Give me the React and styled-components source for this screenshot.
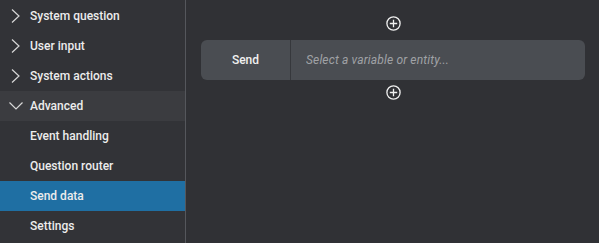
import React from "react";
import styled, { createGlobalStyle } from "styled-components";

const GlobalStyle = createGlobalStyle`
  html, body {
    margin: 0;
    padding: 0;
    background: #303135;
  }
  body {
    font-family: Roboto, "Liberation Sans", sans-serif;
  }
`;

const Layout = styled.div`
  display: flex;
  height: 100vh;
  overflow: hidden;
`;

const Sidebar = styled.nav`
  width: 185px;
  flex-shrink: 0;
  padding-top: 1px;
  background: #323337;
  border-right: 1px solid #55575c;
`;

const Row = styled.div`
  display: flex;
  align-items: center;
  gap: 6px;
  height: 30px;
  padding-left: ${(p) => (p.$child ? "30px" : "8px")};
  background: ${(p) => (p.$active ? "#1f6fa3" : p.$open ? "#3b3c40" : "transparent")};
  color: #ececec;
  font-size: 12px;
  font-weight: 500;
  cursor: pointer;
`;

const Icon = styled.svg`
  width: 16px;
  height: 16px;
  flex-shrink: 0;
  fill: none;
  stroke: #d8d8d8;
  stroke-width: 1.2;
`;

const Main = styled.main`
  flex: 1;
  display: flex;
  flex-direction: column;
  align-items: center;
  padding: 16px 14px 0 15px;
`;

const AddButton = styled.button`
  width: 15px;
  height: 15px;
  padding: 0;
  border: none;
  background: none;
  display: flex;
  margin-bottom: ${(p) => p.$gap || 0}px;
  cursor: pointer;

  svg {
    width: 15px;
    height: 15px;
    fill: none;
    stroke: #f0f0f0;
    stroke-width: 1.3;
  }
`;

const Card = styled.div`
  width: 100%;
  height: 40px;
  display: flex;
  background: #4a4d52;
  border-radius: 6px;
  margin-bottom: 5px;
  overflow: hidden;
`;

const Label = styled.div`
  width: 89px;
  display: flex;
  align-items: center;
  justify-content: center;
  color: #f0f0f0;
  font-size: 12px;
  font-weight: 500;
  border-right: 1px solid #36383c;
`;

const Input = styled.input`
  flex: 1;
  border: none;
  background: transparent;
  padding: 0 15px;
  color: #ddd;
  font-family: inherit;
  font-size: 12px;
  letter-spacing: 0.15px;
  font-style: italic;
  outline: none;

  &::placeholder {
    color: #a0a2a6;
  }
`;

const Chevron = ({ open }) => (
  <Icon viewBox="0 0 16 16">
    {open ? <path d="M1.5 4.5 L8 11 L14.5 4.5" /> : <path d="M4 1.5 L11 8 L4 14.5" />}
  </Icon>
);

const Plus = () => (
  <svg viewBox="0 0 15 15">
    <circle cx="7.5" cy="7.5" r="6.6" />
    <path d="M7.5 3.8 V11.2 M3.8 7.5 H11.2" />
  </svg>
);

const groups = ["System question", "User input", "System actions"];
const advanced = ["Event handling", "Question router", "Send data", "Settings"];

export default function App() {
  return (
    <>
      <GlobalStyle />
      <Layout>
        <Sidebar>
          {groups.map((g) => (
            <Row key={g}>
              <Chevron />
              {g}
            </Row>
          ))}
          <Row $open>
            <Chevron open />
            Advanced
          </Row>
          {advanced.map((a) => (
            <Row key={a} $child $active={a === "Send data"}>
              {a}
            </Row>
          ))}
        </Sidebar>
        <Main>
          <AddButton $gap={9}>
            <Plus />
          </AddButton>
          <Card>
            <Label>Send</Label>
            <Input placeholder="Select a variable or entity..." />
          </Card>
          <AddButton>
            <Plus />
          </AddButton>
        </Main>
      </Layout>
    </>
  );
}
